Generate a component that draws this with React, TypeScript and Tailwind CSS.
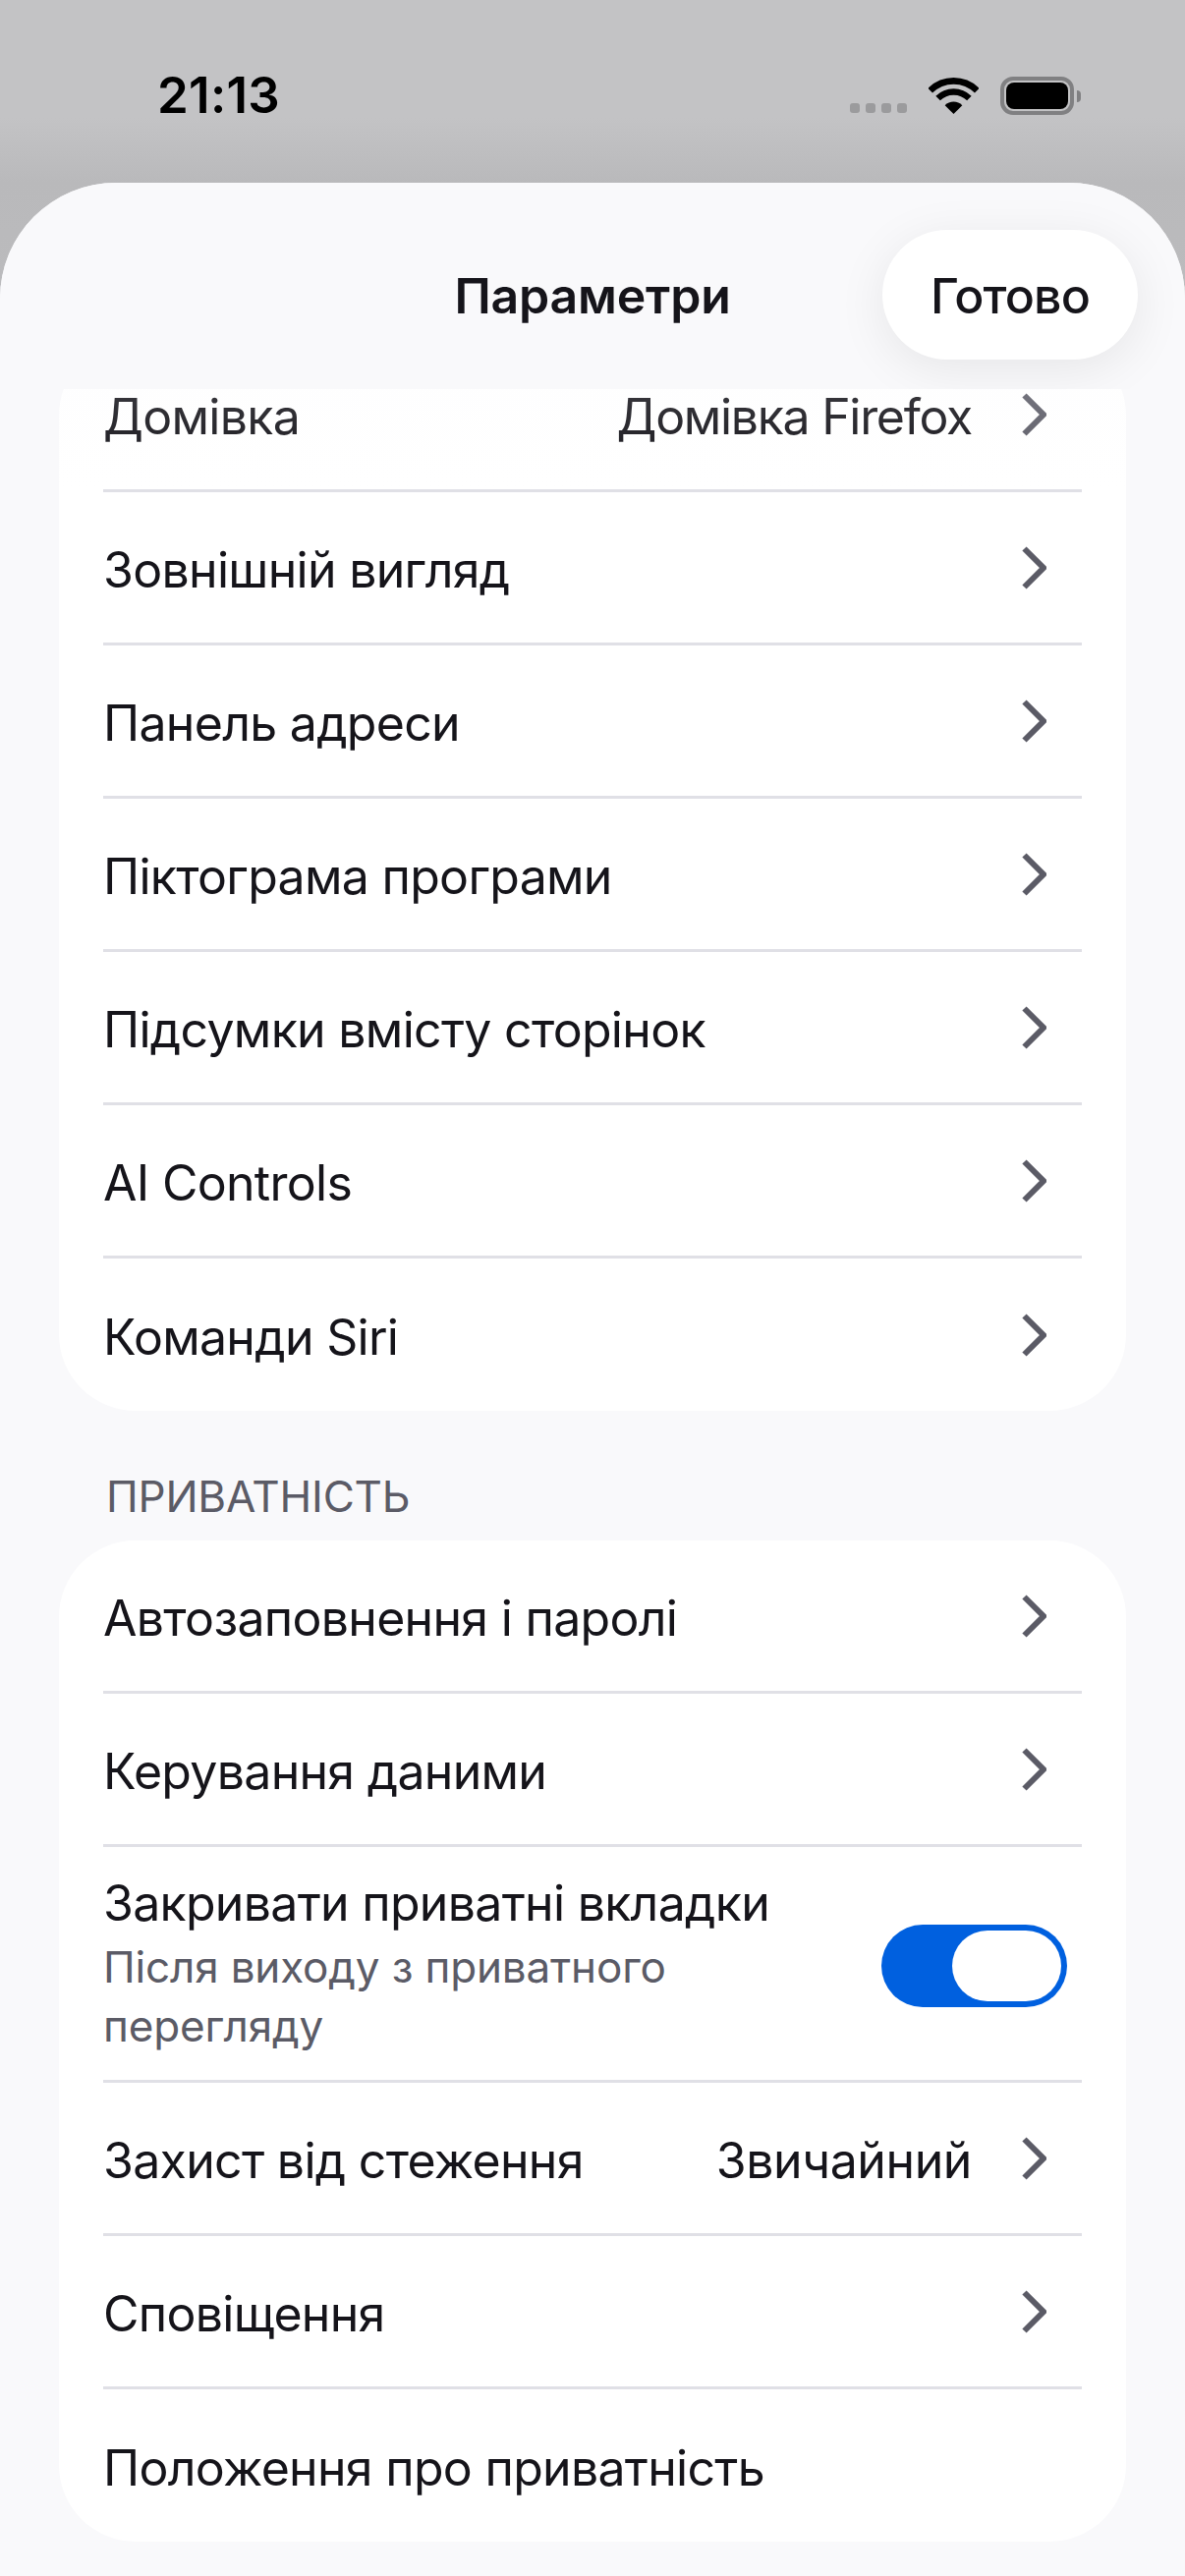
function Chevron() {
  return (
    <svg width="25" height="44" viewBox="0 0 25 44" fill="none" className="shrink-0 mr-[36px]">
      <path d="M2.5 2.5L22 22L2.5 41.5" stroke="#5b5b66" strokeWidth="6" />
    </svg>
  );
}

function Row({ label, value, chevron = true, last, tightValue }: { label: string; value?: string; chevron?: boolean; last?: boolean; tightValue?: boolean }) {
  return (
    <div className={`flex items-center justify-between ml-[45px] mr-[45px] ${last ? "h-[155px]" : "h-[156px] border-b-[3px] border-[#e0e0e6]"}`}>
      <span className="pt-[5px]">{label}</span>
      <div className="flex items-center gap-[51px]">
        {value && <span className={`pt-[5px] ${tightValue ? "tracking-[-1.3px]" : "tracking-[-0.4px]"}`}>{value}</span>}
        {chevron && <Chevron />}
      </div>
    </div>
  );
}

function StatusBar() {
  return (
    <div className="h-[186px] shrink-0 flex items-start justify-between pl-[160px] pr-[106px] pt-[66px]">
      <span className="text-[51px] leading-[62px] font-semibold text-black tracking-[0.3px]">21:13</span>
      <div className="flex items-end pt-[12px]">
        <div className="flex gap-[6px] mb-[1px] mr-[22px]">
          <div className="w-[10px] h-[10px] rounded-[3px] bg-[#9b9b9d]" />
          <div className="w-[10px] h-[10px] rounded-[3px] bg-[#9b9b9d]" />
          <div className="w-[10px] h-[10px] rounded-[3px] bg-[#9b9b9d]" />
          <div className="w-[10px] h-[10px] rounded-[3px] bg-[#9b9b9d]" />
        </div>
        <svg width="51" height="37" viewBox="0 0 51 37" className="mr-[22px]">
          <path d="M1.7 13.2A33.7 33.7 0 0 1 49.3 13.2" fill="none" stroke="#000" strokeWidth="6.6" />
          <path d="M9.6 21.1A22.5 22.5 0 0 1 41.4 21.1" fill="none" stroke="#000" strokeWidth="6.4" />
          <path d="M25.5 37L16.66 28.16A12.5 12.5 0 0 1 34.34 28.16Z" fill="#000" />
        </svg>
        <div className="flex items-center mb-[-1px]">
          <div className="w-[75px] h-[39px] rounded-[13px] border-[4px] border-[#808082] p-[2px]">
            <div className="w-full h-full rounded-[8px] bg-black" />
          </div>
          <div className="w-[4px] h-[12px] ml-[3px] rounded-r-[4px] bg-[#808082]" />
        </div>
      </div>
    </div>
  );
}

export default function App() {
  return (
    <div
      className="w-[1206px] h-[2622px] overflow-hidden flex flex-col bg-[linear-gradient(to_bottom,#c3c3c5_0px,#c3c3c5_120px,#b9b9bb_186px,#bcbcbe_340px)] text-[#15141a] text-[50px] tracking-[-0.7px]"
      style={{ fontFamily: "Inter, 'Noto Sans', sans-serif" }}
    >
      <StatusBar />

      {/* Sheet */}
      <div className="flex-1 min-h-0 flex flex-col bg-[#f9f9fb] rounded-t-[118px] overflow-hidden">
        <header className="relative z-10 h-[210px] shrink-0 overflow-hidden grid grid-cols-[1fr_auto_1fr] items-center bg-[#f9f9fb] pt-[18px]">
          <div />
          <h1 className="text-[50px] font-semibold pt-[2px] tracking-[-0.2px]">Параметри</h1>
          <button className="justify-self-end mr-[48px] w-[260px] h-[132px] rounded-[66px] bg-white font-medium pt-[3px] tracking-[-0.85px] shadow-[0_10px_50px_rgba(0,0,0,0.08)]">
            Готово
          </button>
        </header>

        <div className="relative flex-1 min-h-0 overflow-hidden">
          <div className="absolute inset-x-0 top-0 h-[100px] z-10 pointer-events-none bg-gradient-to-b from-[#f9f9fb]/15 to-[#f9f9fb]/0" />

          <div className="mx-[60px] mt-[-51px] bg-white rounded-[78px]">
            <Row label="Домівка" value="Домівка Firefox" tightValue />
            <Row label="Зовнішній вигляд" />
            <Row label="Панель адреси" />
            <Row label="Піктограма програми" />
            <Row label="Підсумки вмісту сторінок" />
            <Row label="AI Controls" />
            <Row label="Команди Siri" last />
          </div>

          <div className="h-[132px] pl-[108px] pt-[60px] text-[44px] leading-[54px] text-[#5b5b66] tracking-[-0.2px]">ПРИВАТНІСТЬ</div>

          <div className="mx-[60px] bg-white rounded-[78px]">
            <Row label="Автозаповнення і паролі" />
            <Row label="Керування даними" />
            <div className="flex items-center justify-between ml-[45px] mr-[45px] h-[240px] border-b-[3px] border-[#e0e0e6]">
              <div>
                <div className="leading-[62px]">Закривати приватні вкладки</div>
                <div className="mt-[4px] text-[44px] leading-[60px] text-[#5b5b66] tracking-[-0.15px]">
                  Після виходу з приватного <br />
                  перегляду
                </div>
              </div>
              <div className="mr-[15px] mt-[4px] w-[189px] h-[84px] rounded-full bg-[#0060df] p-[6px] flex justify-end">
                <div className="w-[111px] h-[72px] rounded-full bg-white" />
              </div>
            </div>
            <Row label="Захист від стеження" value="Звичайний" />
            <Row label="Сповіщення" />
            <Row label="Положення про приватність" chevron={false} last />
          </div>
        </div>
      </div>
    </div>
  );
}
